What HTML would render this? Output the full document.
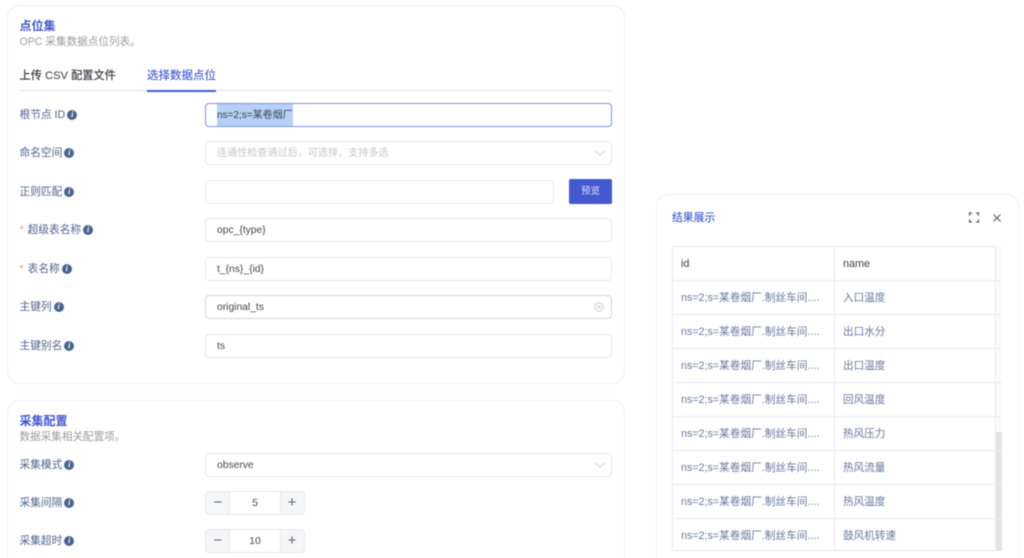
<!DOCTYPE html>
<html lang="zh">
<head>
<meta charset="utf-8">
<style>
html,body{margin:0;padding:0;width:1024px;height:558px;overflow:hidden;background:#fff}
body{font-family:"Liberation Sans","Noto Sans CJK SC",sans-serif;font-size:11px;color:#3c4456;position:relative}
#root{position:absolute;left:0;top:0;width:1024px;height:558px;overflow:hidden;filter:blur(.45px)}
.a{position:absolute;white-space:nowrap}
.card{position:absolute;border:1px solid #eceef2;border-radius:12px;background:#fff;box-sizing:border-box}
.ttl{color:#3f56d2;font-size:12px;font-weight:700;line-height:16px;height:16px}
.sub{color:#9a9ca2;font-size:10.6px;line-height:14px;height:14px}
.lab{color:#4d648c;font-size:10.7px;line-height:16px;height:16px;left:19.5px;display:flex;align-items:center}
.star{color:#f78f8f;margin-right:4px}
.i{display:inline-block;width:10px;height:10px;border-radius:50%;background:#49648f;color:#fff;font:italic bold 8px/10px "Liberation Serif",serif;text-align:center;margin-left:2px}
.inp{position:absolute;left:205px;width:407px;height:24px;border:1px solid #e6e8ef;border-radius:4px;box-sizing:border-box;background:#fff;line-height:24px;padding-left:11px;font-size:10.3px;color:#43474f}
.st{position:absolute;left:205px;width:100px;height:24px;border:1px solid #e6e8ee;border-radius:4px;box-sizing:border-box;background:#f5f6f8}
.st b{position:absolute;left:23px;top:0;width:50px;height:22px;background:#fff;border-left:1px solid #e6e8ee;border-right:1px solid #e6e8ee;text-align:center;font:400 10.5px/22px "Liberation Sans",sans-serif;color:#43474f}
.st i{position:absolute;top:0;font:400 15px/21px "Liberation Sans",sans-serif;color:#5f636c;width:24px;text-align:center}
.tb{position:absolute;left:672px;top:246px;width:330px;height:305px;border:1px solid #e7e9f1;border-right:0;box-sizing:border-box}
.hl{position:absolute;left:672px;width:330px;height:1px;background:#e9ebf2}
.c1{position:absolute;left:681px;color:#66799f;font-size:10.7px;line-height:16px;white-space:nowrap}
.c2{position:absolute;left:843px;color:#66799f;font-size:10.6px;line-height:16px;white-space:nowrap}
</style>
</head>
<body>
<div id="root">
  <div class="card" style="left:7px;top:5px;width:618px;height:379px"></div>
  <div class="a ttl" style="left:19.5px;top:18px">点位集</div>
  <div class="a sub" style="left:19.5px;top:35px">OPC 采集数据点位列表。</div>
  <div class="a" style="left:19.5px;top:68px;font-size:11.2px;line-height:16px;color:#34383f;font-weight:500">上传 CSV 配置文件</div>
  <div class="a" style="left:147px;top:68px;font-size:11.5px;line-height:16px;color:#4c62d8;font-weight:500">选择数据点位</div>
  <div class="a" style="left:19px;top:90px;width:593px;height:1px;background:#dfe2f2"></div>
  <div class="a" style="left:147px;top:89.5px;width:69px;height:2px;background:#4359d2"></div>

  <div class="a lab" style="top:106.5px">根节点 ID<span class="i">i</span></div>
  <div class="inp" style="top:103px;border-color:#7d90e6;padding-left:0"><span class="a" style="left:11px;top:0;height:22px;width:76px;background:#b6d1f5"></span><span class="a" style="left:11px;top:0;color:#3a414f;font-size:10px">ns=2;s=某卷烟厂</span></div>

  <div class="a lab" style="top:145px">命名空间<span class="i">i</span></div>
  <div class="inp" style="top:141px;color:#c4c7ce;font-size:10.1px">连通性检查通过后，可选择，支持多选
    <svg class="a" style="right:5px;top:7px" width="12" height="8" viewBox="0 0 12 8"><path d="M1.500 1.500L6 6l4.500-4.500" fill="none" stroke="#d2d5da" stroke-width="1"/></svg></div>

  <div class="a lab" style="top:183.5px">正则匹配<span class="i">i</span></div>
  <div class="inp" style="top:180px;width:349px"></div>
  <div class="a" style="left:569px;top:179px;width:43px;height:25px;background:#4359cf;border-radius:2px;color:#dfe3f7;text-align:center;font-size:9.5px;line-height:25px">预览</div>

  <div class="a lab" style="top:222px"><span class="star">*</span>超级表名称<span class="i">i</span></div>
  <div class="inp" style="top:218px">opc_{type}</div>

  <div class="a lab" style="top:260.5px"><span class="star">*</span>表名称<span class="i">i</span></div>
  <div class="inp" style="top:257px">t_{ns}_{id}</div>

  <div class="a lab" style="top:299px">主键列<span class="i">i</span></div>
  <div class="inp" style="top:295px;border-color:#d4d6dc">original_ts
    <svg class="a" style="right:7px;top:6px" width="10" height="10" viewBox="0 0 10 10"><circle cx="5" cy="5" r="4.200" fill="none" stroke="#c8cbd1" stroke-width=".9"/><path d="M3.400 3.400l3.200 3.200M6.600 3.400L3.400 6.600" stroke="#c8cbd1" stroke-width=".9"/></svg></div>

  <div class="a lab" style="top:337.5px">主键别名<span class="i">i</span></div>
  <div class="inp" style="top:334px">ts</div>

  <div class="card" style="left:7px;top:400px;width:618px;height:200px"></div>
  <div class="a ttl" style="left:19.5px;top:413px">采集配置</div>
  <div class="a sub" style="left:19.5px;top:430px">数据采集相关配置项。</div>

  <div class="a lab" style="top:456.5px">采集模式<span class="i">i</span></div>
  <div class="inp" style="top:453px">observe
    <svg class="a" style="right:5px;top:7px" width="12" height="8" viewBox="0 0 12 8"><path d="M1.500 1.500L6 6l4.500-4.500" fill="none" stroke="#d2d5da" stroke-width="1"/></svg></div>

  <div class="a lab" style="top:495px">采集间隔<span class="i">i</span></div>
  <div class="st" style="top:491px"><i style="left:0">−</i><b>5</b><i style="right:0">+</i></div>

  <div class="a lab" style="top:533px">采集超时<span class="i">i</span></div>
  <div class="st" style="top:529px"><i style="left:0">−</i><b>10</b><i style="right:0">+</i></div>

  <div class="card" style="left:656px;top:194px;width:363px;height:400px"></div>
  <div class="a" style="left:672px;top:210px;color:#4c62d8;font-size:10.800px;line-height:16px;font-weight:500">结果展示</div>
  <svg class="a" style="left:968px;top:212px" width="12" height="11" viewBox="0 0 12 11"><path d="M1.500 3.500V1H4M8 1h2.500V3.500M10.500 7.500V10H8M4 10H1.500V7.500" fill="none" stroke="#55595f" stroke-width="1.300"/></svg>
  <svg class="a" style="left:992px;top:212.500px" width="10" height="10" viewBox="0 0 10 10"><path d="M1.500 1.500l7 7M8.500 1.500l-7 7" stroke="#55595f" stroke-width="1.100"/></svg>

  <div class="tb"></div>
  <div class="a" style="left:995px;top:246px;width:7px;height:305px;background:#fafafb"></div>
  <div class="a" style="left:996px;top:432px;width:6px;height:119px;background:#e2e3e5"></div>
  <div class="a" style="left:834px;top:246px;width:1px;height:305px;background:#e9ebf2"></div>
  <div class="a" style="left:995px;top:246px;width:1px;height:305px;background:#e9ebf2"></div>
  <div class="hl" style="top:280px"></div><div class="hl" style="top:314px"></div><div class="hl" style="top:348px"></div><div class="hl" style="top:382px"></div><div class="hl" style="top:416px"></div><div class="hl" style="top:450px"></div><div class="hl" style="top:484px"></div><div class="hl" style="top:518px"></div>

  <div class="a" style="left:681px;top:256px;font-size:10.800px;line-height:16px;color:#3a3e47">id</div>
  <div class="a" style="left:843px;top:256px;font-size:10.800px;line-height:16px;color:#3a3e47">name</div>

  <div class="c1" style="top:290px">ns=2;s=某卷烟厂.制丝车间....</div><div class="c2" style="top:290px">入口温度</div>
  <div class="c1" style="top:324px">ns=2;s=某卷烟厂.制丝车间....</div><div class="c2" style="top:324px">出口水分</div>
  <div class="c1" style="top:358px">ns=2;s=某卷烟厂.制丝车间....</div><div class="c2" style="top:358px">出口温度</div>
  <div class="c1" style="top:392px">ns=2;s=某卷烟厂.制丝车间....</div><div class="c2" style="top:392px">回风温度</div>
  <div class="c1" style="top:426px">ns=2;s=某卷烟厂.制丝车间....</div><div class="c2" style="top:426px">热风压力</div>
  <div class="c1" style="top:460px">ns=2;s=某卷烟厂.制丝车间....</div><div class="c2" style="top:460px">热风流量</div>
  <div class="c1" style="top:494px">ns=2;s=某卷烟厂.制丝车间....</div><div class="c2" style="top:494px">热风温度</div>
  <div class="c1" style="top:528px">ns=2;s=某卷烟厂.制丝车间....</div><div class="c2" style="top:528px">鼓风机转速</div>
</div>
</body>
</html>
